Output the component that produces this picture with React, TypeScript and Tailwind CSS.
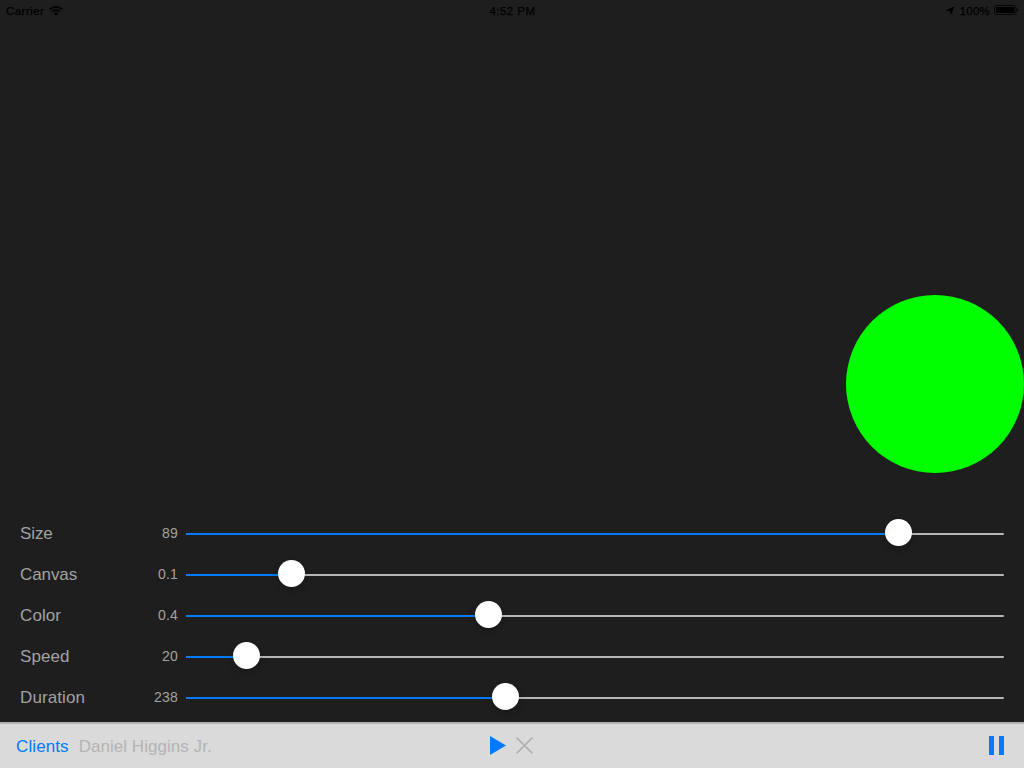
type Setting = { label: string; value: string; thumb: number; tracking: string };

const TRACK_WIDTH = 818;

const settings: Setting[] = [
  { label: 'Size', value: '89', thumb: 699, tracking: 'tracking-[-0.1px]' },
  { label: 'Canvas', value: '0.1', thumb: 92, tracking: 'tracking-[-0.1px]' },
  { label: 'Color', value: '0.4', thumb: 289, tracking: 'tracking-[0.1px]' },
  { label: 'Speed', value: '20', thumb: 47, tracking: 'tracking-[0.05px]' },
  { label: 'Duration', value: '238', thumb: 306, tracking: 'tracking-[0.1px]' },
];

function StatusBar() {
  return (
    <header className="grid h-5 grid-cols-3 items-center pr-[5px] pl-1.5 pt-[3px] text-[11.5px] leading-none text-black [-webkit-text-stroke:0.25px_black]">
      <div className="flex items-center gap-[5px]">
        <span className="tracking-[0.45px]">Carrier</span>
        <svg width="14" height="10" viewBox="0 0 14 10" fill="none" stroke="#000" strokeWidth="1.6" className="-mt-0.5">
          <path d="M1 3.4a8.5 8.5 0 0 1 12 0M3.1 5.8a5.4 5.4 0 0 1 7.8 0" />
          <path d="M4.9 7.4a3 3 0 0 1 4.2 0L7 9.7z" fill="#000" stroke="none" />
        </svg>
      </div>
      <span className="text-center tracking-[0.45px]">4:52 PM</span>
      <div className="flex items-center justify-end">
        <svg width="10" height="10" viewBox="0 0 10 10" className="-mt-px mr-[5px]">
          <path d="M9.6.3 5.7 9.5 4.9 5.1.3 4.7z" fill="#000" />
        </svg>
        <span className="mr-1 tracking-[0.2px]">100%</span>
        <svg width="25" height="10" viewBox="0 0 25 10" className="-mt-[3px]">
          <rect x="0.5" y="0.5" width="21.5" height="9" rx="1.8" fill="none" stroke="#000" strokeWidth="0.8" />
          <rect x="2" y="2" width="18.5" height="6" rx="0.6" />
          <path d="M23 3.3c1.8.4 1.8 3 0 3.4z" />
        </svg>
      </div>
    </header>
  );
}

function Slider({ thumb }: { thumb: number }) {
  return (
    <div className="relative h-[41px] w-[818px] pt-[21px]">
      <div className="flex h-0.5 overflow-hidden rounded-[1px] bg-[#b7b7b7]">
        <div className="bg-[#007aff]" style={{ width: `${((thumb + 13.5) / TRACK_WIDTH) * 100}%` }} />
      </div>
      <div
        className="absolute top-[7px] size-[27px] rounded-full bg-white shadow-[0_3px_7px_rgba(0,0,0,0.2)]"
        style={{ left: thumb }}
      />
    </div>
  );
}

export default function App() {
  return (
    <div className="flex h-[768px] w-[1024px] flex-col overflow-hidden bg-[#1e1e1e] font-['Liberation_Sans',Arial,sans-serif]">
      <StatusBar />
      <main className="flex h-[492px] justify-end pt-[275px]">
        <div className="size-[178px] rounded-full bg-[#0f0]" />
      </main>
      <section className="flex h-[210px] flex-col pl-5 text-[#a2a2a2]">
        {settings.map((s) => (
          <div key={s.label} className="flex h-[41px] items-center">
            <span className={`w-[108px] pt-0.5 text-[17px] leading-5 ${s.tracking}`}>{s.label}</span>
            <span className="mr-2 w-[50px] pt-px text-right text-[14px] leading-4 tracking-[0.2px]">{s.value}</span>
            <Slider thumb={s.thumb} />
          </div>
        ))}
      </section>
      <footer className="grid h-[46px] grid-cols-3 items-center border-t-2 border-[#b2b2b2] bg-[#dadada] pr-5 pl-4 text-[17px] leading-5">
        <div className="flex gap-[10px] whitespace-nowrap pt-0.5">
          <span className="tracking-[0.1px] text-[#007aff]">Clients</span>
          <span className="tracking-[0.04px] text-[#b4b4b4]">Daniel Higgins Jr.</span>
        </div>
        <div className="flex items-center justify-center gap-[10px] pb-0.5 pl-1">
          <svg width="16" height="19" viewBox="0 0 16 19">
            <path d="M0 0 16 9.5 0 19z" fill="#007aff" />
          </svg>
          <svg width="17" height="17" viewBox="0 0 17 17">
            <path d="M.5.5l16 16M16.5.5l-16 16" stroke="#b2b2b2" strokeWidth="1.6" />
          </svg>
        </div>
        <div className="flex justify-end gap-[5px] pb-0.5">
          <div className="h-[19px] w-[5px] bg-[#007aff]" />
          <div className="h-[19px] w-[5px] bg-[#007aff]" />
        </div>
      </footer>
    </div>
  );
}
